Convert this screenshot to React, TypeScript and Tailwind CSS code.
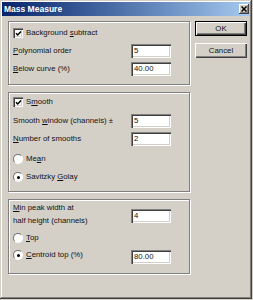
import React from 'react'

const sunken =
  'shadow-[inset_1px_1px_0_#808080,inset_2px_2px_0_#404040,inset_-1px_-1px_0_#ffffff,inset_-2px_-2px_0_#d4d0c8]'

function CheckBox() {
  return (
    <span className={`flex h-[10px] w-[10px] shrink-0 items-center justify-center bg-white ${sunken}`}>
      <svg width="7" height="7" viewBox="0 0 7 7">
        <path d="M1 3.2 L2.7 5 L6 1.4" stroke="#000" strokeWidth="1.5" fill="none" />
      </svg>
    </span>
  )
}

function Radio({ checked }: { checked?: boolean }) {
  return (
    <span className="flex h-[10px] w-[10px] shrink-0 items-center justify-center rounded-full border border-t-[#707070] border-l-[#707070] border-b-white border-r-white bg-white">
      {checked && <span className="h-[3px] w-[3px] rounded-full bg-black" />}
    </span>
  )
}

function Field({ value, className = '' }: { value: string; className?: string }) {
  return (
    <div className={`ml-auto mr-[18px] flex h-[14px] w-[40px] shrink-0 items-center bg-white pl-[3px] text-[7.8px] ${sunken} ${className}`}>
      {value}
    </div>
  )
}

function U({ children }: { children: React.ReactNode }) {
  return <span className="underline underline-offset-[1px]">{children}</span>
}

function Group({ className, children }: { className: string; children: React.ReactNode }) {
  return (
    <div className={`box-border w-[182px] border border-[#808080] shadow-[inset_1px_1px_0_#ffffff,1px_1px_0_#ffffff] ${className}`}>
      {children}
    </div>
  )
}

export default function App() {
  return (
    <div className="h-[300px] w-[253px] bg-[#d4d0c8] font-['Liberation_Sans',Arial,sans-serif] text-[7.8px] leading-none text-[#111]">
      <div className="box-border h-[299px] w-[252px] bg-[#d4d0c8] p-[2px] shadow-[inset_-1px_-1px_0_#404040,inset_1px_1px_0_#d4d0c8,inset_-2px_-2px_0_#808080,inset_2px_2px_0_#ffffff]">
        {/* Title bar */}
        <div className="flex h-[14px] items-center bg-gradient-to-r from-[#0a246a] to-[#a6caf0] pl-[2px] pr-[1px]">
          <span className="text-[8.5px] font-bold text-white">Mass Measure</span>
          <span className="ml-auto flex h-[10px] w-[10px] items-center justify-center bg-[#d4d0c8] shadow-[inset_-1px_-1px_0_#404040,inset_1px_1px_0_#ffffff,inset_-2px_-2px_0_#808080]">
            <svg width="6" height="6" viewBox="0 0 6 6">
              <path d="M0.5 0.5 L5.5 5.5 M5.5 0.5 L0.5 5.5" stroke="#000" strokeWidth="1.5" />
            </svg>
          </span>
        </div>

        <div className="flex pl-[6px] pt-[5px]">
          <div className="flex flex-col">
            {/* Background subtract */}
            <Group className="h-[64px] pt-[4px]">
              <div className="flex h-[14px] items-center pl-[4px]">
                <CheckBox />
                <span className="ml-[3px]">Background <U>s</U>ubtract</span>
              </div>
              <div className="mt-[4px] flex h-[14px] items-center pl-[4px]">
                <span><U>P</U>olynomial order</span>
                <Field value="5" />
              </div>
              <div className="mt-[4px] flex h-[14px] items-center pl-[4px]">
                <span><U>B</U>elow curve (%)</span>
                <Field value="40.00" />
              </div>
            </Group>

            {/* Smooth */}
            <Group className="mt-[7px] h-[100px] pt-[2px]">
              <div className="flex h-[14px] items-center pl-[4px]">
                <CheckBox />
                <span className="ml-[3px]">S<U>m</U>ooth</span>
              </div>
              <div className="mt-[5px] flex h-[14px] items-center pl-[4px]">
                <span>Smooth <U>w</U>indow (channels) ±</span>
                <Field value="5" />
              </div>
              <div className="mt-[4px] flex h-[14px] items-center pl-[4px]">
                <span><U>N</U>umber of smooths</span>
                <Field value="2" />
              </div>
              <div className="mt-[6px] flex h-[14px] items-center pl-[4px]">
                <Radio />
                <span className="ml-[3px]">Me<U>a</U>n</span>
              </div>
              <div className="mt-[4px] flex h-[14px] items-center pl-[4px]">
                <Radio checked />
                <span className="ml-[3px]">Savitzky <U>G</U>olay</span>
              </div>
            </Group>

            {/* Peak width */}
            <Group className="mt-[7px] h-[75px] pt-[1px]">
              <div className="flex items-start pl-[4px]">
                <div className="leading-[13px]">
                  <div><U>M</U>in peak width at</div>
                  <div>half height (channels)</div>
                </div>
                <Field value="4" className="mt-[8px]" />
              </div>
              <div className="mt-[4px] flex h-[14px] items-center pl-[4px]">
                <Radio />
                <span className="ml-[3px]"><U>T</U>op</span>
              </div>
              <div className="mt-[5px] flex h-[14px] items-center pl-[4px]">
                <div className="mb-[4px] flex items-center">
                  <Radio checked />
                  <span className="ml-[3px]"><U>C</U>entroid top (%)</span>
                </div>
                <Field value="80.00" />
              </div>
            </Group>
          </div>

          {/* Buttons */}
          <div className="ml-[5px] flex flex-col">
            <button className="box-border flex h-[15px] w-[52px] items-center justify-center border border-black bg-[#d4d0c8] text-[7.8px] shadow-[inset_1px_1px_0_#ffffff,inset_-1px_-1px_0_#404040,inset_-2px_-2px_0_#808080]">
              OK
            </button>
            <button className="mt-[7px] box-border flex h-[15px] w-[52px] items-center justify-center bg-[#d4d0c8] text-[7.8px] shadow-[inset_1px_1px_0_#ffffff,inset_-1px_-1px_0_#404040,inset_-2px_-2px_0_#808080]">
              Cancel
            </button>
          </div>
        </div>
      </div>
    </div>
  )
}
